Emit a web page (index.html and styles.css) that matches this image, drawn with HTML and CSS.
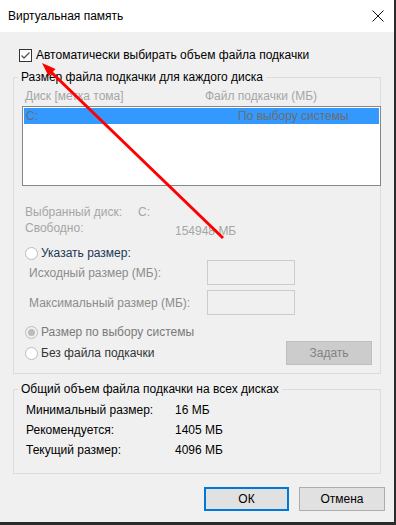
FILE: index.html
```html
<!DOCTYPE html>
<html lang="ru">
<head>
<meta charset="utf-8">
<title>Виртуальная память</title>
<link rel="stylesheet" href="styles.css">
</head>
<body>
<div class="window">
  <div class="titlebar">
    <span class="title">Виртуальная память</span>
    <svg class="close" width="12" height="12" viewBox="0 0 12 12"><path d="M0.5 0.5 L11.5 11.5 M11.5 0.5 L0.5 11.5" stroke="#111" stroke-width="1" fill="none"/></svg>
  </div>
  <div class="content">
    <div class="check-row">
      <span class="checkbox"><svg width="11" height="11" viewBox="0 0 11 11"><path d="M1.5 5.5 L4 8 L9.5 2.5" stroke="#555" stroke-width="1.3" fill="none"/></svg></span>
      <span class="label-dark">Автоматически выбирать объем файла подкачки</span>
    </div>

    <div class="group group1">
      <div class="legend">Размер файла подкачки для каждого диска</div>
      <div class="headers">
        <span class="col1">Диск [метка тома]</span>
        <span>Файл подкачки (МБ)</span>
      </div>
      <div class="listbox">
        <div class="sel-row">
          <span class="lcol1">C:</span>
          <span>По выбору системы</span>
        </div>
      </div>
      <div class="info-row first">
        <span class="icol1">Выбранный диск:</span>
        <span>C:</span>
      </div>
      <div class="info-row">
        <span class="icol1b">Свободно:</span>
        <span class="free">154948 МБ</span>
      </div>
      <div class="radio-row r1">
        <span class="radio"></span>
        <span class="label-navy">Указать размер:</span>
      </div>
      <div class="input-row">
        <span class="in-label">Исходный размер (МБ):</span>
        <span class="input"></span>
      </div>
      <div class="input-row second">
        <span class="in-label">Максимальный размер (МБ):</span>
        <span class="input"></span>
      </div>
      <div class="radio-row r2">
        <span class="radio checked"><span class="dot"></span></span>
        <span class="label-grey">Размер по выбору системы</span>
      </div>
      <div class="radio-row r3">
        <span class="radio"></span>
        <span class="label-dark2">Без файла подкачки</span>
        <span class="btn-disabled">Задать</span>
      </div>
    </div>

    <div class="group group2">
      <div class="legend">Общий объем файла подкачки на всех дисках</div>
      <div class="totals">
        <div class="t-row"><span class="tcol1">Минимальный размер:</span><span>16 МБ</span></div>
        <div class="t-row"><span class="tcol1">Рекомендуется:</span><span>1405 МБ</span></div>
        <div class="t-row"><span class="tcol1">Текущий размер:</span><span>4096 МБ</span></div>
      </div>
    </div>

    <div class="buttons">
      <span class="btn ok">ОК</span>
      <span class="btn cancel">Отмена</span>
    </div>
  </div>

  <svg class="arrow" width="396" height="525" viewBox="0 0 396 525">
    <line x1="223" y1="238" x2="50" y2="71" stroke="#ff0000" stroke-width="3"/>
    <polygon points="42,63 55.6,69.1 48.6,76.3" fill="#ff0000"/>
  </svg>
</div>
</body>
</html>
```
FILE: styles.css
```css
* { box-sizing: border-box; }
html, body { margin: 0; padding: 0; background: #f0f0f0; }
body {
  font-family: "Liberation Sans", Arial, sans-serif;
  font-size: 12px;
  color: #000;
}
.window {
  position: relative;
  width: 396px;
  height: 525px;
  background: #f0f0f0;
  border-right: 2px solid #2b2b2b;
  border-bottom: 3px solid #2b2b2b;
  overflow: hidden;
}
.titlebar {
  height: 32px;
  background: #fff;
  display: flex;
  align-items: center;
  justify-content: space-between;
  padding: 0 10px 0 8px;
}
.title { color: #000; }
.close { display: block; }
.content { display: flex; flex-direction: column; }

.check-row {
  margin-top: 16px;
  height: 14px;
  display: flex;
  align-items: center;
  padding-left: 19px;
  gap: 4px;
}
.checkbox {
  width: 13px;
  height: 13px;
  border: 1px solid #333;
  background: #fff;
  display: flex;
  align-items: center;
  justify-content: center;
}
.checkbox svg { display: block; }
.label-dark { color: #000; line-height: 14px; }

.group {
  margin-left: 13px;
  width: 368px;
  border: 1px solid #dcdcdc;
}
.group1 { margin-top: 15px; height: 297px; }
.group2 { margin-top: 15px; height: 85px; }
.legend {
  margin-top: -8px;
  margin-left: 4px;
  padding: 0 3px;
  height: 14px;
  line-height: 14px;
  background: #f0f0f0;
  align-self: flex-start;
  width: max-content;
  color: #000;
}
.headers {
  margin-top: 5px;
  height: 14px;
  line-height: 14px;
  display: flex;
  padding-left: 11px;
  color: #a6a6a6;
}
.col1 { width: 180px; }
.listbox {
  margin-top: 3px;
  margin-left: 8px;
  width: 359px;
  height: 80px;
  border: 1px solid #828790;
  background: #fff;
  padding: 1px;
}
.sel-row {
  height: 16px;
  line-height: 16px;
  background: #3399ff;
  display: flex;
  padding-left: 2px;
  color: #6d6d6d;
}
.lcol1 { width: 212px; }

.info-row {
  display: flex;
  align-items: flex-start;
  padding-left: 11px;
  height: 14px;
  line-height: 14px;
  margin-top: 2px;
  color: #a6a6a6;
}
.info-row.first { margin-top: 19px; }
.icol1 { width: 113px; }
.icol1b { width: 150px; }
.free { padding-top: 3px; }

.radio-row {
  display: flex;
  align-items: center;
  padding-left: 11px;
  gap: 3px;
  height: 14px;
  line-height: 14px;
}
.r1 { margin-top: 11px; }
.r2 { margin-top: 10px; }
.r3 { margin-top: 2px; height: 24px; }
.radio {
  width: 13px;
  height: 13px;
  border-radius: 50%;
  border: 1px solid #bcbcbc;
  background: #fff;
  display: flex;
  align-items: center;
  justify-content: center;
}
.radio.checked { background: #f0f0f0; }
.dot {
  width: 7px;
  height: 7px;
  border-radius: 50%;
  background: #bcbcbc;
}
.label-navy { color: #1c3656; }
.label-grey { color: #7a7a7a; }
.label-dark2 { color: #333; }
.btn-disabled {
  margin-left: auto;
  margin-right: 8px;
  width: 86px;
  height: 24px;
  background: #cccccc;
  border: 1px solid #bfbfbf;
  color: #838383;
  display: flex;
  align-items: center;
  justify-content: center;
}
.input-row {
  display: flex;
  align-items: center;
  padding-left: 15px;
  height: 25px;
}
.input-row.second { margin-top: 5px; }
.in-label { width: 178px; color: #8c8c8c; }
.input {
  width: 88px;
  height: 25px;
  border: 1px solid #cccccc;
  background: #f0f0f0;
}

.totals { margin-top: 4px; }
.t-row {
  display: flex;
  height: 20px;
  line-height: 20px;
  padding-left: 12px;
}
.tcol1 { width: 149px; }

.buttons {
  margin-top: 13px;
  display: flex;
  justify-content: flex-end;
  gap: 10px;
  padding-right: 9px;
}
.btn {
  height: 24px;
  background: #e1e1e1;
  display: flex;
  align-items: center;
  justify-content: center;
  color: #000;
}
.ok { width: 85px; border: 2px solid #0078d7; }
.cancel { width: 86px; border: 1px solid #adadad; }

.arrow {
  position: absolute;
  left: 0;
  top: 0;
  pointer-events: none;
}
```
